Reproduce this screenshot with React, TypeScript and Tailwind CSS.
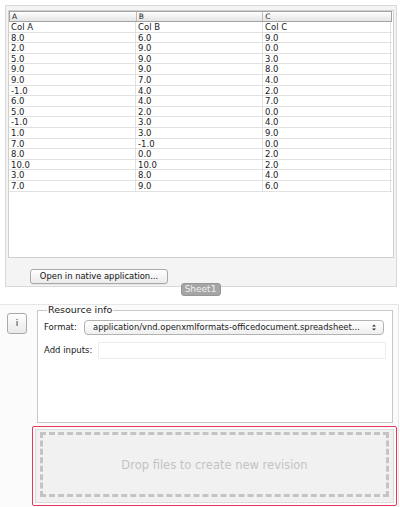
import React from "react";

const rows: string[][] = [
  ["Col A", "Col B", "Col C"],
  ["8.0", "6.0", "9.0"],
  ["2.0", "9.0", "0.0"],
  ["5.0", "9.0", "3.0"],
  ["9.0", "9.0", "8.0"],
  ["9.0", "7.0", "4.0"],
  ["-1.0", "4.0", "2.0"],
  ["6.0", "4.0", "7.0"],
  ["5.0", "2.0", "0.0"],
  ["-1.0", "3.0", "4.0"],
  ["1.0", "3.0", "9.0"],
  ["7.0", "-1.0", "0.0"],
  ["8.0", "0.0", "2.0"],
  ["10.0", "10.0", "2.0"],
  ["3.0", "8.0", "4.0"],
  ["7.0", "9.0", "6.0"],
];

const colW = ["w-[127px]", "w-[127px]", "w-[128px]"];

export default function App() {
  return (
    <div
      className="w-[400px] h-[507px] bg-white overflow-hidden text-[#1a1a1a]"
      style={{ fontFamily: '"DejaVu Sans", Verdana, sans-serif' }}
    >
      {/* Top spreadsheet panel */}
      <div className="ml-[5px] mt-[5px] w-[392px] h-[282px] border border-[#d9d9d9] bg-[#f4f4f4] pl-[2px] pt-[4px] flex flex-col">
        <div className="w-[386px] h-[248px] bg-white border border-[#cfcfcf] flex flex-col">
          {/* header */}
          <div className="flex w-[383px] h-[11px] border border-[#a3a3a3] bg-gradient-to-b from-[#fefefe] to-[#e4e4e4]">
            {["A", "B", "C"].map((h, i) => (
              <div
                key={h}
                className={`${colW[i]} ${i < 2 ? "border-r border-[#bdbdbd]" : ""} pl-[2px] text-[7.5px] leading-[9px]`}
              >
                {h}
              </div>
            ))}
          </div>
          {rows.map((r, ri) => (
            <div key={ri} className="flex w-[383px] h-[10.6px] border-b border-[#e1e1e1]">
              {r.map((c, ci) => (
                <div
                  key={ci}
                  className={`${colW[ci]} border-r border-[#e1e1e1] pl-[2px] text-[8.5px] leading-[10px]`}
                >
                  {c}
                </div>
              ))}
            </div>
          ))}
        </div>
        <div className="pl-[22px] pt-[4px]">
          <button className="w-[138px] h-[15px] rounded-[3px] border border-[#a9a9a9] bg-gradient-to-b from-white to-[#ebebeb] text-[8.4px] leading-[13px] text-[#111] shadow-[0_1px_0_rgba(0,0,0,0.06)]">
            Open in native application...
          </button>
        </div>
      </div>

      {/* Sheet tab */}
      <div className="flex justify-center -mt-[4px] relative">
        <div className="w-[40px] h-[13px] rounded-[3px] bg-[#a5a5a5] border border-[#979797] text-[9px] leading-[11px] text-center text-[#f0f0f0] ml-[1px]">
          Sheet1
        </div>
      </div>

      {/* Bottom section */}
      <div className="mt-[8px] h-[203px] w-[399px] border-t border-r border-[#e6e6e6] bg-[#fbfbfb] flex flex-col">
        <div className="flex">
          <div className="w-[37px] pl-[7px] pt-[4px]">
            <button className="w-[20px] h-[21px] rounded-[3px] border border-[#a9a9a9] bg-gradient-to-b from-white to-[#e9e9e9] text-[9px] leading-[19px] text-center text-[#222]">
              i
            </button>
          </div>
          <fieldset className="w-[356px] h-[118px] border border-[#c8c8c8] bg-white pl-[6px]">
            <legend className="ml-[3px] px-[1px] text-[9.5px] leading-[10px] text-[#1a1a1a]">Resource info</legend>
            <div className="flex items-center mt-[5px] h-[15px]">
              <span className="w-[40px] text-[8.5px] leading-[15px]">Format:</span>
              <div className="w-[300px] h-[15px] rounded-[4px] border border-[#b3b3b3] bg-gradient-to-b from-white to-[#efefef] flex items-center pl-[8px] pr-[6px]">
                <span className="flex-1 overflow-hidden whitespace-nowrap text-[8.4px] leading-[13px]">
                  application/vnd.openxmlformats-officedocument.spreadsheet...
                </span>
                <svg width="6" height="9" viewBox="0 0 6 9" className="ml-[2px]">
                  <path d="M1 3.5 L3 1.5 L5 3.5 Z" fill="#333" />
                  <path d="M1 5.5 L3 7.5 L5 5.5 Z" fill="#333" />
                </svg>
              </div>
            </div>
            <div className="flex items-center mt-[7px] h-[17px]">
              <span className="w-[54px] text-[8.5px] leading-[15px]">Add inputs:</span>
              <div className="w-[288px] h-[17px] border border-[#ececec] bg-white" />
            </div>
          </fieldset>
        </div>
        <div className="ml-[32px] mt-[3px] w-[365px] h-[80px] border border-[#e8375c] rounded-[2px] p-[2px]">
          <div className="h-full border border-[#dcdcdc] bg-[#f1f1f1] pt-[2px] px-[4px] pb-[5px]">
            <div className="h-full border-[3px] border-dashed border-[#c4c4c4] flex items-center justify-center pt-[2px] text-[11.5px] text-[#c3c3c3]">
              Drop files to create new revision
            </div>
          </div>
        </div>
      </div>
    </div>
  );
}
